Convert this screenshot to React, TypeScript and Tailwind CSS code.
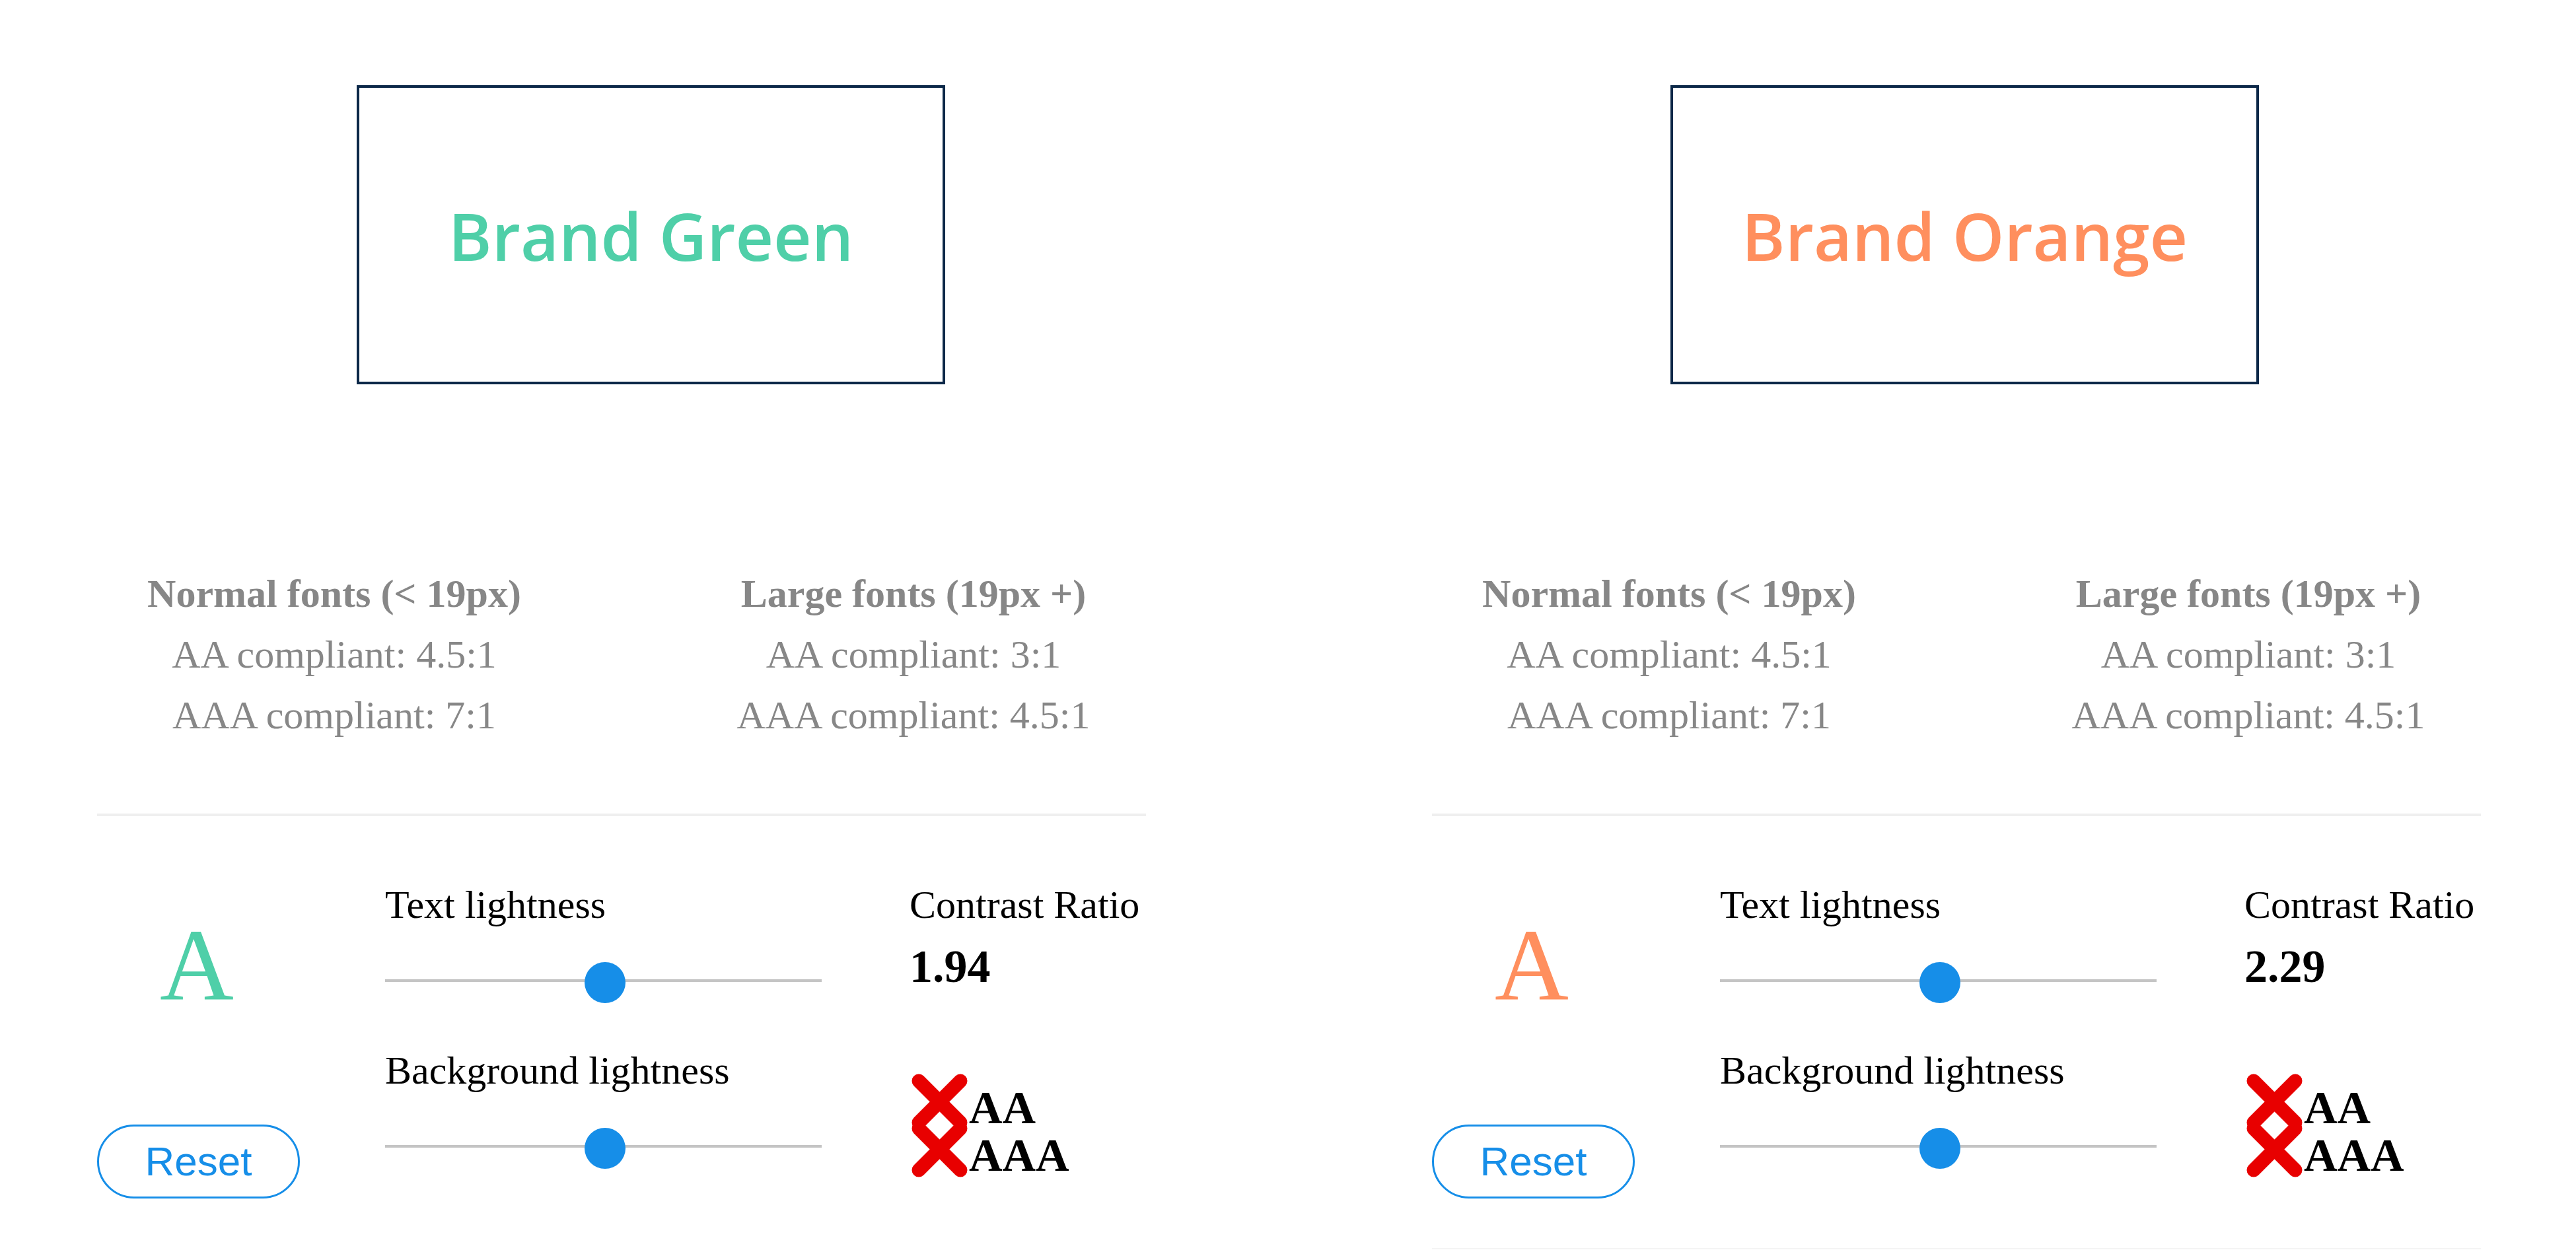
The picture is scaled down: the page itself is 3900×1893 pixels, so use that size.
import React from 'react';

const serif = 'font-["Liberation_Serif","Times_New_Roman",serif]';

const panels = [
  { name: 'Brand Green', color: 'text-[#4fcfa8]', ratio: '1.94', boxOffset: 'ml-[393px]', bottomLine: false },
  { name: 'Brand Orange', color: 'text-[#ff8f5e]', ratio: '2.29', boxOffset: 'ml-[361px]', bottomLine: true },
];

function CrossMark() {
  return (
    <svg width="91" height="91" viewBox="0 0 91 91" className="shrink-0">
      <path d="M14 14 L77 77 M77 14 L14 77" stroke="#e80000" strokeWidth="21" strokeLinecap="round" fill="none" />
    </svg>
  );
}

function Slider({ label, top }: { label: string; top: string }) {
  return (
    <div className={top}>
      <p className="text-[60px] leading-[69px] text-black">{label}</p>
      <div className="relative mt-[52px] h-[62px] w-[661px] pt-[26px]">
        <div className="h-[4px] bg-[#c4c4c4]" />
        {/* thumb */}
        <div className="absolute left-[302px] top-0 h-[62px] w-[62px] rounded-full bg-[#168ee8]" />
      </div>
    </div>
  );
}

function Panel({ panel }: { panel: (typeof panels)[number] }) {
  return (
    <div className="flex w-[1588px] shrink-0 flex-col pt-[129px]">
      {/* Brand box */}
      <div
        className={`${panel.boxOffset} flex h-[453px] w-[891px] shrink-0 items-center justify-center border-4 border-[#0c2848]`}
      >
        <span className={`font-["Open_Sans",sans-serif] text-[100px] font-semibold leading-none ${panel.color}`}>
          {panel.name}
        </span>
      </div>

      {/* Guidelines */}
      <div className={`${serif} ml-[59px] mt-[271px] flex gap-[277px] text-[60px] leading-[92px] text-[#878787]`}>
        <div className="w-[600px] text-center">
          <p className="font-bold">Normal fonts (&lt; 19px)</p>
          <p>AA compliant: 4.5:1</p>
          <p>AAA compliant: 7:1</p>
        </div>
        <div className="w-[600px] text-center">
          <p className="font-bold">Large fonts (19px +)</p>
          <p>AA compliant: 3:1</p>
          <p>AAA compliant: 4.5:1</p>
        </div>
      </div>

      <div className="mt-[103px] h-[4px] shrink-0 bg-[#efefef]" />

      {/* Controls */}
      <div className={`${serif} flex`}>
        <div className="flex w-[436px] flex-col">
          <div className={`mt-[148px] w-[302px] text-center text-[155px] leading-none ${panel.color}`}>A</div>
          <button className='mt-[164px] h-[112px] w-[307px] rounded-full border-[3px] border-[#168ee8] font-["Liberation_Sans",Arial,sans-serif] text-[62px] leading-none text-[#168ee8]'>
            Reset
          </button>
        </div>

        <div className="flex flex-col">
          <Slider label="Text lightness" top="mt-[100px]" />
          <Slider label="Background lightness" top="mt-[68px]" />
        </div>

        <div className="ml-[133px] flex flex-col text-black">
          <p className="mt-[100px] text-[60px] leading-[69px]">Contrast Ratio</p>
          <p className="mt-[23px] text-[70px] font-bold leading-[72px]">{panel.ratio}</p>
          <div className="mt-[142px] text-[70px] font-bold leading-[72px]">
            <div className="flex h-[72px] items-end">
              <CrossMark />
              <span className="-ml-[1px]">AA</span>
            </div>
            <div className="flex h-[72px] items-end">
              <CrossMark />
              <span className="-ml-[1px]">AAA</span>
            </div>
          </div>
        </div>
      </div>

      {panel.bottomLine && <div className="mt-[75px] h-[2px] shrink-0 bg-[#f4f4f4]" />}
    </div>
  );
}

export default function App() {
  return (
    <div className="flex h-[1893px] gap-[433px] overflow-hidden bg-white pl-[147px]">
      {panels.map((p) => (
        <Panel key={p.name} panel={p} />
      ))}
    </div>
  );
}
